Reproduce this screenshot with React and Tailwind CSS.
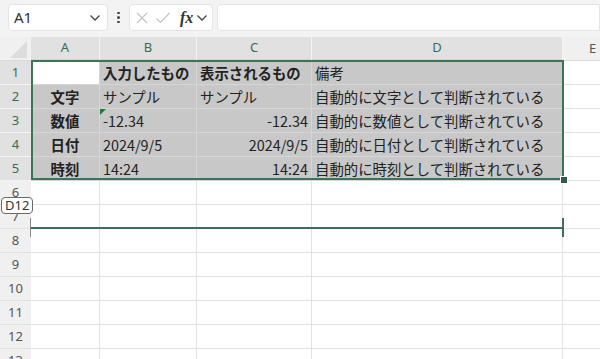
import React from "react";

const COLS = [
  { key: "A", w: 69 },
  { key: "B", w: 97 },
  { key: "C", w: 115 },
  { key: "D", w: 251 },
  { key: "E", w: 60 },
];

const DATA = {
  1: { A: "", B: { t: "入力したもの", b: true }, C: { t: "表示されるもの", b: true }, D: { t: "備考" } },
  2: { A: { t: "文字", b: true, c: true }, B: { t: "サンプル" }, C: { t: "サンプル" }, D: { t: "自動的に文字として判断されている" } },
  3: { A: { t: "数値", b: true, c: true }, B: { t: "-12.34", tri: true }, C: { t: "-12.34", r: true }, D: { t: "自動的に数値として判断されている" } },
  4: { A: { t: "日付", b: true, c: true }, B: { t: "2024/9/5" }, C: { t: "2024/9/5", r: true }, D: { t: "自動的に日付として判断されている" } },
  5: { A: { t: "時刻", b: true, c: true }, B: { t: "14:24" }, C: { t: "14:24", r: true }, D: { t: "自動的に時刻として判断されている" } },
};

const font = { fontFamily: '"Noto Sans CJK JP", "Noto Sans", sans-serif' };

function Chevron({ className }) {
  return (
    <svg width="12" height="8" viewBox="0 0 12 8" className={className}>
      <path d="M1.5 1.5 L6 6 L10.5 1.5" fill="none" stroke="#444" strokeWidth="1.3" />
    </svg>
  );
}

export default function App() {
  const rows = Array.from({ length: 13 }, (_, i) => i + 1);
  return (
    <div className="w-[600px] h-[359px] overflow-hidden bg-[#f3f3f3] relative text-[#222]" style={font}>
      {/* Formula bar */}
      <div className="h-[37px] flex items-start pt-[4px] pl-[8px] gap-0">
        <div className="w-[100px] h-[27px] bg-white rounded-[4px] border border-[#e4e4e4] flex items-center pl-[5px] pr-[6px] justify-between">
          <span className="text-[15px] text-[#333]" style={{ fontFamily: '"Noto Sans", sans-serif' }}>A1</span>
          <Chevron />
        </div>
        <div className="w-[21px] h-[27px] flex flex-col items-center justify-center gap-[2px]">
          <div className="w-[2.5px] h-[2.5px] rounded-full bg-[#444]" />
          <div className="w-[2.5px] h-[2.5px] rounded-full bg-[#444]" />
          <div className="w-[2.5px] h-[2.5px] rounded-full bg-[#444]" />
        </div>
        <div className="w-[84px] h-[27px] bg-white rounded-[4px] border border-[#e4e4e4] flex items-center pl-[5px] gap-[6px]">
          <svg width="14" height="14" viewBox="0 0 14 14">
            <path d="M2 2 L12 12 M12 2 L2 12" stroke="#c4c4c4" strokeWidth="1.2" fill="none" />
          </svg>
          <svg width="16" height="14" viewBox="0 0 16 14">
            <path d="M1.5 7.5 L5.5 11.5 L14.5 2" stroke="#c4c4c4" strokeWidth="1.2" fill="none" />
          </svg>
          <span className="italic font-bold text-[16px] leading-none text-[#333] ml-[3px]" style={{ fontFamily: '"Liberation Serif", serif' }}>fx</span>
          <Chevron className="-ml-[3px]" />
        </div>
        <div className="ml-[4px] flex-1 h-[27px] bg-white rounded-l-[4px] border border-[#e4e4e4]" />
      </div>

      {/* Sheet */}
      <div className="relative">
        <div className="grid" style={{ gridTemplateColumns: "31px 69px 97px 115px 251px 60px" }}>
          {/* header row */}
          <div className="h-[24px] bg-[#f0f0f0] relative overflow-hidden border-b border-[#dadada]">
            <svg width="31" height="24" className="absolute inset-0">
              <path d="M27 4 L27 21 L10 21 Z" fill="#dcdcdc" />
            </svg>
          </div>
          {COLS.map((c) => {
            const sel = c.key !== "E";
            return (
              <div
                key={c.key}
                className={`h-[24px] flex items-center justify-center text-[13px] border-r ${sel ? "bg-[#e1e1e1] text-[#3b6b50] border-[#f4f4f4] border-b-2 border-b-[#c9d9cf]" : "bg-[#f0f0f0] text-[#555] border-[#dadada] border-b border-b-[#dadada]"}`}
                style={{ fontFamily: '"Noto Sans", sans-serif' }}
              >
                {c.key}
              </div>
            );
          })}
          {rows.map((r) => {
            const selRow = r <= 5;
            return (
              <React.Fragment key={r}>
                <div
                  className={`h-[24px] flex items-center justify-center text-[13px] border-b ${selRow ? "bg-[#e1e1e1] text-[#3b6b50] border-[#f4f4f4]" : "bg-[#f0f0f0] text-[#555] border-[#e2e2e2]"}`}
                  style={{ fontFamily: '"Noto Sans", sans-serif' }}
                >
                  {r}
                </div>
                {COLS.map((c) => {
                  const inSel = selRow && c.key !== "E";
                  const active = r === 1 && c.key === "A";
                  const d = DATA[r] && DATA[r][c.key];
                  const bg = active ? "bg-white" : inSel ? "bg-[#c8c8c8]" : "bg-white";
                  const line = inSel ? "border-[#d6d6d6]" : "border-[#e2e2e2]";
                  return (
                    <div
                      key={c.key}
                      className={`h-[24px] relative border-r border-b ${line} ${bg} flex items-center overflow-visible whitespace-nowrap px-[3px] text-[14.4px] ${d && d.c ? "justify-center" : d && d.r ? "justify-end" : "justify-start"} ${d && d.b ? "font-bold" : ""}`}
                    >
                      {d && d.tri && (
                        <svg width="6" height="6" className="absolute left-0 top-0">
                          <path d="M0 0 L6 0 L0 6 Z" fill="#1e7a3a" />
                        </svg>
                      )}
                      {d ? d.t : ""}
                    </div>
                  );
                })}
              </React.Fragment>
            );
          })}
        </div>

        {/* selection border */}
        <div className="absolute left-[31px] top-[23px] w-[533px] h-[120px] border-2 border-[#3f7356] pointer-events-none" />
        <div className="absolute left-[561px] top-[140px] w-[6px] h-[6px] bg-[#2f5e45] border border-white box-content -ml-[1px] -mt-[1px]" />

        {/* insertion line */}
        <div className="absolute left-[31px] top-[190px] w-[533px] h-[2px] bg-[#3f6e55]" />
        <div className="absolute left-[562px] top-[181px] w-[2px] h-[19px] bg-[#3f6e55]" />
        <div className="absolute left-[30px] top-[181px] w-[1px] h-[19px] bg-[#8a8a8a]" />

        {/* tooltip */}
        <div
          className="absolute left-[1px] top-[160px] h-[17px] px-[3px] bg-white border border-[#6a6a6a] rounded-[4px] text-[13px] leading-[15px] text-[#333]"
          style={{ fontFamily: '"Noto Sans", sans-serif' }}
        >
          D12
        </div>
      </div>
    </div>
  );
}
